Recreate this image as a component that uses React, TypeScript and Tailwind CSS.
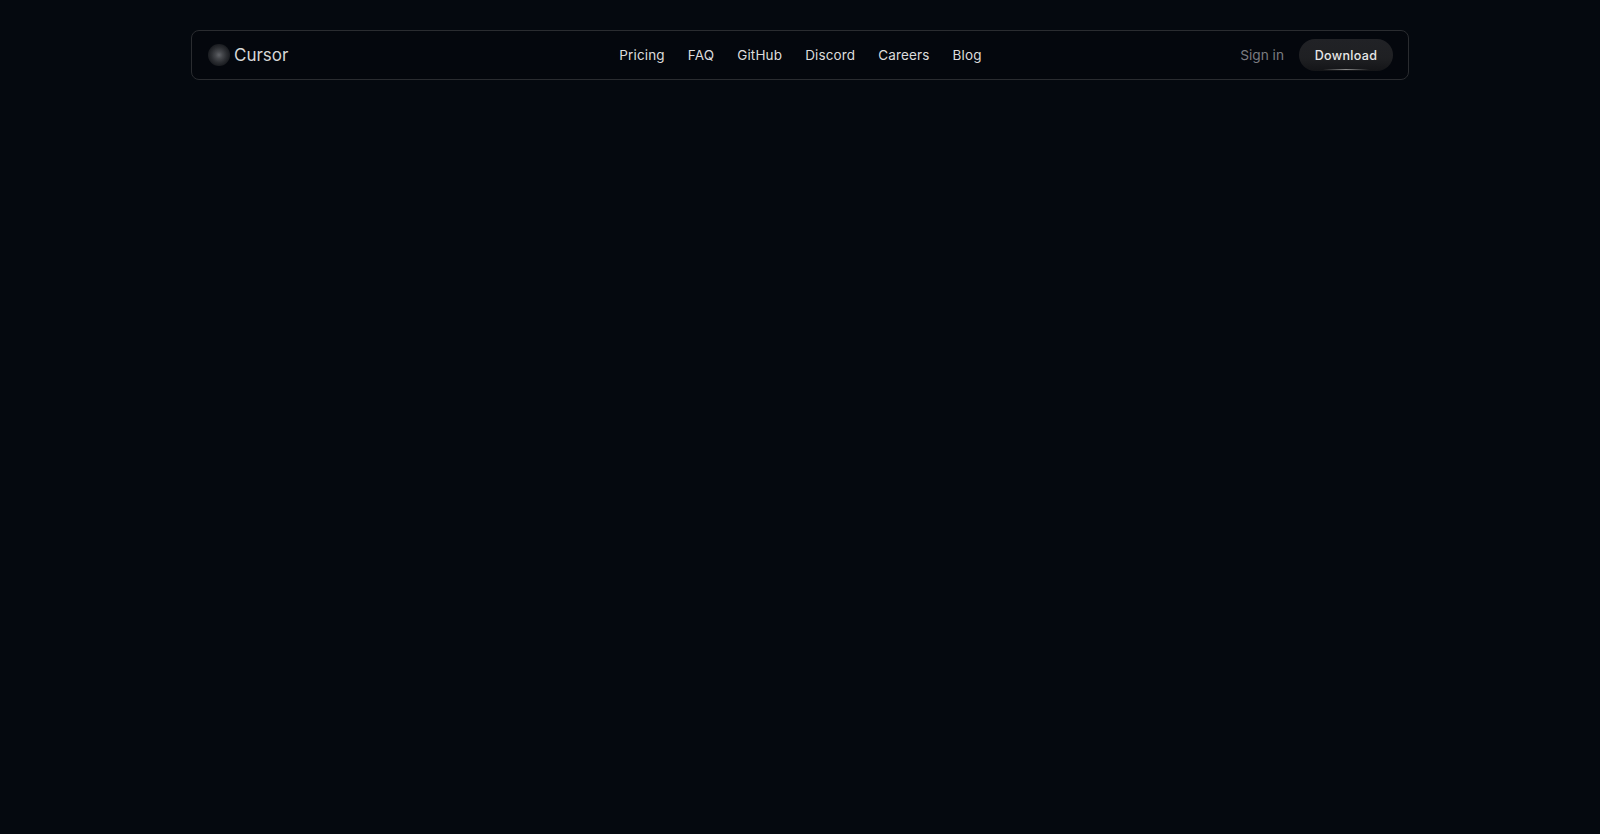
export default function App() {
  const links = ["Pricing", "FAQ", "GitHub", "Discord", "Careers", "Blog"];
  return (
    <div className="min-h-[834px] bg-[#05090f] px-[191px] pt-[30px] font-['Inter',sans-serif]">
      <nav className="grid h-[50px] grid-cols-[1fr_auto_1fr] items-center rounded-[8px] border border-[#2a2c30] bg-[#04070d] pl-[16px] pr-[15px]">
        <div className="flex items-center gap-[4px]">
          <div className="relative h-[22px] w-[22px] rounded-full bg-[radial-gradient(circle,#77797d_0%,#55575b_22%,#333539_50%,#1c1e22_74%,#05090f_100%)]">
            <span className="absolute inset-0 rounded-full bg-[radial-gradient(circle,#05090f_0.6px,transparent_0.8px)] bg-[length:2px_2px] opacity-40" />
          </div>
          <span className="text-[17px] leading-[20px] text-[#d6d6d6]">Cursor</span>
        </div>
        <div className="flex items-center gap-[23px]">
          {links.map((l) => (
            <a key={l} className="text-[13.5px] tracking-[0.15px] leading-[16px] text-[#dcdcdc]">{l}</a>
          ))}
        </div>
        <div className="flex items-center justify-end gap-[15px]">
          <span className="text-[13.7px] leading-[16px] text-[#7a7b80]">Sign in</span>
          <button className="relative flex h-[32px] w-[94px] items-center justify-center rounded-full bg-[linear-gradient(180deg,#212226_0%,#1f2023_60%,#141518_100%)] pt-px text-[12.5px] font-medium tracking-[0.35px] leading-[16px] text-[#e8e8e8]">
            Download
            <span className="absolute bottom-[1px] left-[24px] h-px w-[46px] bg-[linear-gradient(90deg,transparent,#8a8a8a,transparent)]" />
          </button>
        </div>
      </nav>
    </div>
  );
}
